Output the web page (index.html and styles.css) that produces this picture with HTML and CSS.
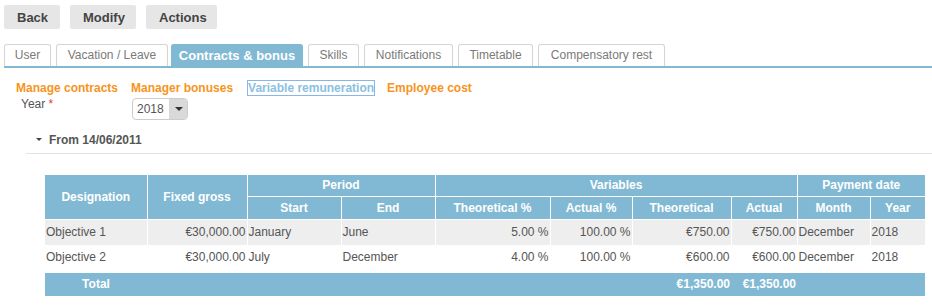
FILE: index.html
```html
<!DOCTYPE html>
<html lang="en">

<head>
    <meta charset="UTF-8" />
    <title>Variable remuneration</title>
    <link rel="stylesheet" href="styles.css">
</head>

<body>
    <div class="toolbar">
        <button class="btn back">Back</button>
        <button class="btn modify">Modify</button>
        <button class="btn actions">Actions</button>
    </div>

    <ul class="tabs">
        <li class="user">User</li>
        <li class="vacation">Vacation / Leave</li>
        <li class="contracts active">Contracts &amp; bonus</li>
        <li class="skills">Skills</li>
        <li class="notif">Notifications</li>
        <li class="timetable">Timetable</li>
        <li class="comp">Compensatory rest</li>
    </ul>

    <div class="sublinks">
        <a>Manage contracts</a>
        <a>Manager bonuses</a>
        <a class="current">Variable remuneration</a>
        <a>Employee cost</a>
    </div>

    <div class="year-row">
        <label>Year <span class="req">*</span></label>
        <div class="select">
            <span class="value">2018</span>
            <span class="arrow"></span>
        </div>
    </div>

    <div class="section-title">
        <span class="caret"></span>
        From 14/06/2011
    </div>

    <table class="grid">
        <colgroup>
            <col class="c-des">
            <col class="c-fix">
            <col class="c-start">
            <col class="c-end">
            <col class="c-tp">
            <col class="c-ap">
            <col class="c-t">
            <col class="c-a">
            <col class="c-m">
            <col class="c-y">
        </colgroup>
        <thead>
            <tr>
                <th rowspan="2">Designation</th>
                <th rowspan="2">Fixed gross</th>
                <th colspan="2">Period</th>
                <th colspan="4">Variables</th>
                <th colspan="2">Payment date</th>
            </tr>
            <tr class="sub">
                <th>Start</th>
                <th>End</th>
                <th>Theoretical %</th>
                <th>Actual %</th>
                <th>Theoretical</th>
                <th>Actual</th>
                <th>Month</th>
                <th>Year</th>
            </tr>
        </thead>
        <tbody>
            <tr class="odd">
                <td>Objective 1</td>
                <td class="num">€30,000.00</td>
                <td>January</td>
                <td>June</td>
                <td class="num">5.00 %</td>
                <td class="num">100.00 %</td>
                <td class="num">€750.00</td>
                <td class="num">€750.00</td>
                <td>December</td>
                <td>2018</td>
            </tr>
            <tr>
                <td>Objective 2</td>
                <td class="num">€30,000.00</td>
                <td>July</td>
                <td>December</td>
                <td class="num">4.00 %</td>
                <td class="num">100.00 %</td>
                <td class="num">€600.00</td>
                <td class="num">€600.00</td>
                <td>December</td>
                <td>2018</td>
            </tr>
        </tbody>
        <tfoot>
            <tr>
                <td class="total-label">Total</td>
                <td></td>
                <td></td>
                <td></td>
                <td></td>
                <td></td>
                <td class="num">€1,350.00</td>
                <td class="num">€1,350.00</td>
                <td></td>
                <td></td>
            </tr>
        </tfoot>
    </table>
</body>

</html>
```

FILE: styles.css
```css
:root {
    --blue: #81b9d4;
    --orange: #f7941d;
    --text: #555555;
    --row-alt: #eeeeee;
}

* {
    margin: 0;
    padding: 0;
    box-sizing: border-box;
}

body {
    font-family: "Liberation Sans", Arial, sans-serif;
    font-size: 12px;
    color: var(--text);
    background: #ffffff;
    padding: 5px 0 0 4px;
}

/* toolbar */

.toolbar {
    display: flex;
    gap: 10px;
    height: 24px;
}

.btn {
    height: 24px;
    padding: 0 13px;
    border: none;
    border-radius: 2px;
    background: #e6e6e6;
    color: #444444;
    font-family: inherit;
    font-size: 13px;
    font-weight: bold;
}

.btn.back { width: 56px; }
.btn.modify { width: 66px; }
.btn.actions { width: 71px; }

/* tabs */

.tabs {
    list-style: none;
    display: flex;
    gap: 5px;
    margin-top: 15px;
    height: 24px;
    border-bottom: 2px solid var(--blue);
    width: 928px;
}

.tabs li {
    height: 22px;
    line-height: 21px;
    border: 1px solid #d5d5d5;
    border-bottom: none;
    border-radius: 3px 3px 0 0;
    text-align: center;
    font-size: 12px;
    color: #7a7a7a;
    background: #ffffff;
}

.tabs .user { width: 47px; }
.tabs .vacation { width: 112px; }
.tabs .contracts { width: 132px; margin-left: -2px; }
.tabs .skills { width: 51px; }
.tabs .notif { width: 89px; }
.tabs .timetable { width: 75px; }
.tabs .comp { width: 127px; }

.tabs li.active {
    background: var(--blue);
    border-color: var(--blue);
    color: #ffffff;
    font-weight: bold;
    font-size: 13px;
}

/* sub links */

.sublinks {
    display: flex;
    gap: 13px;
    margin: 12px 0 0 12px;
    height: 16px;
    align-items: center;
}

.sublinks a {
    color: var(--orange);
    font-weight: bold;
    font-size: 12px;
}

.sublinks a.current {
    color: #8cbfe0;
    outline: 1px solid #8cb4e4;
    outline-offset: 0;
    margin-left: 2px;
}

/* year */

.year-row {
    display: flex;
    margin: 0 0 0 17px;
    height: 25px;
}

.year-row label {
    width: 111px;
    font-size: 12px;
    color: #555555;
    padding-top: 1px;
}

.req {
    color: #e53935;
}

.select {
    display: flex;
    width: 56px;
    height: 22px;
    margin-top: 2px;
    border: 1px solid #cccccc;
    border-radius: 4px;
    overflow: hidden;
}

.select .value {
    width: 36px;
    line-height: 20px;
    padding-left: 4px;
    color: #555555;
}

.select .arrow {
    flex: 1;
    background: #d9d9d9;
    position: relative;
}

.select .arrow::after {
    content: "";
    position: absolute;
    left: 6px;
    top: 8px;
    border-left: 4px solid transparent;
    border-right: 4px solid transparent;
    border-top: 4px solid #333333;
}

/* section */

.section-title {
    margin: 8px 0 0 22px;
    width: 906px;
    height: 25px;
    border-bottom: 1px solid #e2e2e2;
    padding-left: 10px;
    font-weight: bold;
    color: #555555;
    display: flex;
    align-items: center;
    gap: 7px;
    padding-bottom: 3px;
}

.caret {
    width: 0;
    height: 0;
    border-left: 3px solid transparent;
    border-right: 3px solid transparent;
    border-top: 3px solid #444444;
}

/* table */

.grid {
    margin: 21px 0 0 41px;
    width: 880px;
    border-collapse: collapse;
    table-layout: fixed;
}

.grid th {
    background: var(--blue);
    color: #ffffff;
    font-weight: bold;
    font-size: 12px;
    border: 1px solid #ffffff;
    height: 21px;
    padding: 0;
}

.grid thead tr:first-child th {
    border-top: none;
}

.grid .sub th {
    height: 23px;
}

.c-des { width: 102px; }
.c-fix { width: 100px; }
.c-start { width: 94px; }
.c-end { width: 94px; }
.c-tp { width: 115px; }
.c-ap { width: 82px; }
.c-t { width: 99px; }
.c-a { width: 66px; }
.c-m { width: 73px; }
.c-y { width: 55px; }

.grid th:first-child,
.grid td:first-child {
    border-left: none;
}

.grid th:last-child,
.grid td:last-child {
    border-right: none;
}

.grid tbody td {
    height: 26px;
    padding: 0 1px;
    border-left: 1px solid #ffffff;
    border-right: 1px solid #ffffff;
    color: #555555;
    white-space: nowrap;
}

.grid tbody tr.odd td {
    background: var(--row-alt);
}

.grid .num {
    text-align: right;
}

.grid tfoot td {
    background: var(--blue);
    color: #ffffff;
    font-weight: bold;
    height: 25px;
    padding: 0 1px;
    border-top: 3px solid #ffffff;
    border-left: none;
    border-right: none;
}

.grid .total-label {
    text-align: center;
}
```
